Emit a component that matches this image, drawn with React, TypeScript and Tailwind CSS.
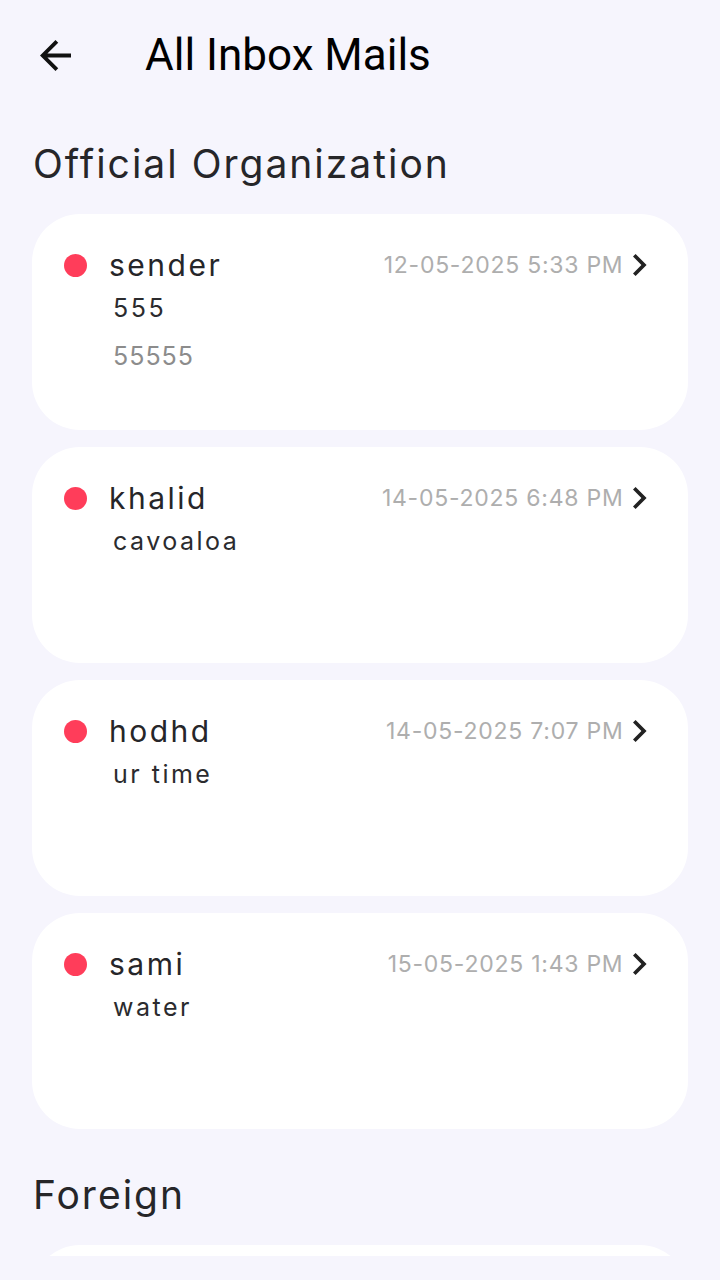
import React from "react";

type Mail = {
  sender: string;
  date: string;
  subject: string;
  body?: string;
};

const official: Mail[] = [
  { sender: "sender", date: "12-05-2025 5:33 PM", subject: "555", body: "55555" },
  { sender: "khalid", date: "14-05-2025 6:48 PM", subject: "cavoaloa" },
  { sender: "hodhd", date: "14-05-2025 7:07 PM", subject: "ur time" },
  { sender: "sami", date: "15-05-2025 1:43 PM", subject: "water" },
];

const body = { fontFamily: "Inter, 'Noto Sans', sans-serif" };

function MailCard({ mail }: { mail: Mail }) {
  return (
    <div className="mx-[32px] mb-[17px] h-[216px] shrink-0 rounded-[48px] bg-white pl-[32px] pr-[41px] pt-[31px]">
      <div className="flex h-[40px] items-center">
        <span className="h-[23px] w-[23px] shrink-0 rounded-full bg-[#ff3d5a]" />
        <span className="ml-[22px] text-[30px] leading-[40px] tracking-[2.5px] text-[#262629]">
          {mail.sender}
        </span>
        <span className="ml-auto text-[23px] leading-[40px] tracking-[0.75px] text-[#aeaeae]">
          {mail.date}
        </span>
        <svg
          viewBox="8.59 6 7.41 12"
          className="ml-[10px] h-[22px] w-[13.6px] shrink-0"
          fill="#222"
        >
          <path d="M10 6L8.59 7.41 13.17 12l-4.58 4.59L10 18l6-6z" />
        </svg>
      </div>
      <div className="mt-[7px] pl-[49px] text-[25px] leading-[32px] tracking-[2.5px] text-[#2b2b2e]">
        {mail.subject}
      </div>
      {mail.body && (
        <div className="mt-[16px] pl-[49px] text-[25px] leading-[32px] tracking-[1px] text-[#8c8c8c]">
          {mail.body}
        </div>
      )}
    </div>
  );
}

export default function App() {
  return (
    <div className="flex h-[1280px] w-[720px] flex-col overflow-hidden bg-[#f6f5fd]" style={body}>
      <div className="flex h-[110px] shrink-0 items-center pl-[40px]">
        <svg viewBox="4 4 16 16" className="h-[31px] w-[31px]" fill="#111">
          <path d="M20 11H7.83l5.59-5.59L12 4l-8 8 8 8 1.41-1.41L7.83 13H20v-2z" />
        </svg>
        <h1
          className="ml-[74px] text-[44px] leading-[52px] text-black"
          style={{ fontFamily: "Roboto, sans-serif" }}
        >
          All Inbox Mails
        </h1>
      </div>
      <div className="flex h-[1146px] flex-col overflow-hidden">
        <h2 className="shrink-0 px-[33px] pb-[28px] pt-[32px] text-[39px] leading-[44px] tracking-[2px] text-[#262629]">
          Official Organization
        </h2>
        {official.map((m) => (
          <MailCard key={m.sender} mail={m} />
        ))}
        <h2 className="shrink-0 px-[33px] pb-[28px] pt-[27px] text-[39px] leading-[44px] tracking-[2px] text-[#262629]">
          Foreign
        </h2>
        <div className="mx-[32px] h-[216px] shrink-0 rounded-[48px] bg-white" />
      </div>
    </div>
  );
}
